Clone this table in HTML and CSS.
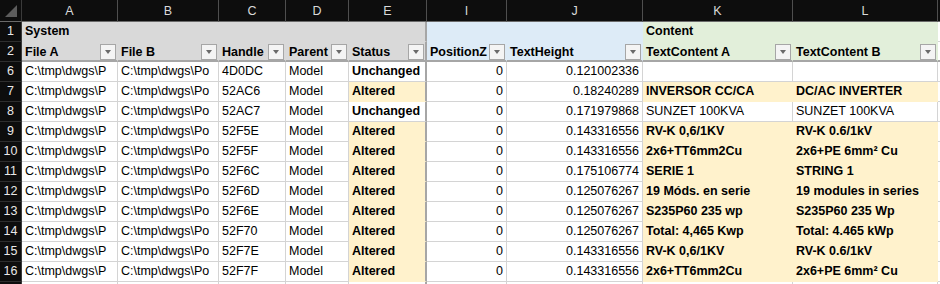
FILE: index.html
```html
<!DOCTYPE html>
<html>
<head>
<meta charset="utf-8">
<link rel="stylesheet" href="styles.css">
</head>
<body>
<div class="sheet">
  <div class="corner"><svg width="22" height="22" viewBox="0 0 22 22"><polygon points="17,5 17,17 5,17" fill="#5c5c5c"/></svg></div>
  <div class="ch">A</div><div class="ch">B</div><div class="ch">C</div><div class="ch">D</div><div class="ch">E</div>
  <div class="ch">I</div><div class="ch">J</div><div class="ch">K</div><div class="ch">L</div><div class="ch last"></div>

  <div class="rh">1</div>
  <div class="c hg b">System</div><div class="c hg"></div><div class="c hg"></div><div class="c hg"></div><div class="c hg fz"></div>
  <div class="c hb"></div><div class="c hb"></div>
  <div class="c hgr b">Content</div><div class="c hgr"></div><div class="c"></div>

  <div class="rh">2</div>
  <div class="c hg b r2">File A<span class="filt"></span></div>
  <div class="c hg b r2">File B<span class="filt"></span></div>
  <div class="c hg b r2">Handle<span class="filt"></span></div>
  <div class="c hg b r2">Parent<span class="filt"></span></div>
  <div class="c hg b r2 fz">Status<span class="filt"></span></div>
  <div class="c hb b r2">PositionZ<span class="filt"></span></div>
  <div class="c hb b r2">TextHeight<span class="filt"></span></div>
  <div class="c hgr b r2">TextContent A<span class="filt"></span></div>
  <div class="c hgr b r2">TextContent B<span class="filt"></span></div>
  <div class="c r2"></div>

  <div class="rh">6</div>
  <div class="c">C:\tmp\dwgs\P</div><div class="c">C:\tmp\dwgs\Po</div><div class="c">4D0DC</div><div class="c">Model</div>
  <div class="c fz b">Unchanged</div><div class="c num">0</div><div class="c num">0.121002336</div>
  <div class="c"></div><div class="c"></div><div class="c"></div>

  <div class="rh">7</div>
  <div class="c">C:\tmp\dwgs\P</div><div class="c">C:\tmp\dwgs\Po</div><div class="c">52AC6</div><div class="c">Model</div>
  <div class="c fz b alt">Altered</div><div class="c num">0</div><div class="c num">0.18240289</div>
  <div class="c b alt">INVERSOR CC/CA</div><div class="c b alt">DC/AC INVERTER</div><div class="c"></div>

  <div class="rh">8</div>
  <div class="c">C:\tmp\dwgs\P</div><div class="c">C:\tmp\dwgs\Po</div><div class="c">52AC7</div><div class="c">Model</div>
  <div class="c fz b">Unchanged</div><div class="c num">0</div><div class="c num">0.171979868</div>
  <div class="c">SUNZET 100KVA</div><div class="c">SUNZET 100KVA</div><div class="c"></div>

  <div class="rh">9</div>
  <div class="c">C:\tmp\dwgs\P</div><div class="c">C:\tmp\dwgs\Po</div><div class="c">52F5E</div><div class="c">Model</div>
  <div class="c fz b alt">Altered</div><div class="c num">0</div><div class="c num">0.143316556</div>
  <div class="c b alt">RV-K 0,6/1KV</div><div class="c b alt">RV-K 0.6/1kV</div><div class="c"></div>

  <div class="rh">10</div>
  <div class="c">C:\tmp\dwgs\P</div><div class="c">C:\tmp\dwgs\Po</div><div class="c">52F5F</div><div class="c">Model</div>
  <div class="c fz b alt">Altered</div><div class="c num">0</div><div class="c num">0.143316556</div>
  <div class="c b alt">2x6+TT6mm2Cu</div><div class="c b alt">2x6+PE 6mm² Cu</div><div class="c"></div>

  <div class="rh">11</div>
  <div class="c">C:\tmp\dwgs\P</div><div class="c">C:\tmp\dwgs\Po</div><div class="c">52F6C</div><div class="c">Model</div>
  <div class="c fz b alt">Altered</div><div class="c num">0</div><div class="c num">0.175106774</div>
  <div class="c b alt">SERIE 1</div><div class="c b alt">STRING 1</div><div class="c"></div>

  <div class="rh">12</div>
  <div class="c">C:\tmp\dwgs\P</div><div class="c">C:\tmp\dwgs\Po</div><div class="c">52F6D</div><div class="c">Model</div>
  <div class="c fz b alt">Altered</div><div class="c num">0</div><div class="c num">0.125076267</div>
  <div class="c b alt">19 Móds. en serie</div><div class="c b alt">19 modules in series</div><div class="c"></div>

  <div class="rh">13</div>
  <div class="c">C:\tmp\dwgs\P</div><div class="c">C:\tmp\dwgs\Po</div><div class="c">52F6E</div><div class="c">Model</div>
  <div class="c fz b alt">Altered</div><div class="c num">0</div><div class="c num">0.125076267</div>
  <div class="c b alt">S235P60 235 wp</div><div class="c b alt">S235P60 235 Wp</div><div class="c"></div>

  <div class="rh">14</div>
  <div class="c">C:\tmp\dwgs\P</div><div class="c">C:\tmp\dwgs\Po</div><div class="c">52F70</div><div class="c">Model</div>
  <div class="c fz b alt">Altered</div><div class="c num">0</div><div class="c num">0.125076267</div>
  <div class="c b alt">Total: 4,465 Kwp</div><div class="c b alt">Total: 4.465 kWp</div><div class="c"></div>

  <div class="rh">15</div>
  <div class="c">C:\tmp\dwgs\P</div><div class="c">C:\tmp\dwgs\Po</div><div class="c">52F7E</div><div class="c">Model</div>
  <div class="c fz b alt">Altered</div><div class="c num">0</div><div class="c num">0.143316556</div>
  <div class="c b alt">RV-K 0,6/1KV</div><div class="c b alt">RV-K 0.6/1kV</div><div class="c"></div>

  <div class="rh">16</div>
  <div class="c">C:\tmp\dwgs\P</div><div class="c">C:\tmp\dwgs\Po</div><div class="c">52F7F</div><div class="c">Model</div>
  <div class="c fz b alt">Altered</div><div class="c num">0</div><div class="c num">0.143316556</div>
  <div class="c b alt">2x6+TT6mm2Cu</div><div class="c b alt">2x6+PE 6mm² Cu</div><div class="c"></div>

  <div class="rh"></div>
  <div class="c"></div><div class="c"></div><div class="c"></div><div class="c"></div>
  <div class="c fz"></div><div class="c"></div><div class="c"></div>
  <div class="c"></div><div class="c"></div><div class="c"></div>
</div>
</body>
</html>
```
FILE: styles.css
```css
html, body {
  margin: 0;
  padding: 0;
  background: #ffffff;
}

body {
  font-family: "Liberation Sans", Arial, sans-serif;
  font-size: 12.5px;
  color: #000000;
}

.sheet {
  display: grid;
  grid-template-columns: 22px 96px 101px 67px 63px 78px 80px 136px 150px 145px 1fr;
  grid-template-rows: 22px repeat(14, 20px);
  width: 940px;
  height: 284px;
  overflow: hidden;
}

.corner {
  background: #0d0d0d;
  border-right: 1px solid #3a3a3a;
  border-bottom: 1px solid #6a6a6a;
  box-sizing: border-box;
  line-height: 0;
}

.ch {
  background: #0d0d0d;
  color: #d9d9d9;
  text-align: center;
  box-sizing: border-box;
  padding-top: 2px;
  line-height: 19px;
  border-right: 1px solid #4e4e4e;
  border-bottom: 1px solid #6a6a6a;
}

.ch.last {
  border-right: none;
}

.rh {
  background: #0d0d0d;
  color: #e8e8e8;
  text-align: center;
  box-sizing: border-box;
  line-height: 19px;
  border-right: 1px solid #3a3a3a;
  border-bottom: 1px solid #2e2e2e;
}

.c {
  position: relative;
  box-sizing: border-box;
  padding: 0 3px;
  line-height: 19px;
  white-space: nowrap;
  overflow: hidden;
  border-right: 1px solid #d4d4d4;
  border-bottom: 1px solid #d4d4d4;
}

.b {
  font-weight: bold;
}

.num {
  text-align: right;
}

.hg {
  background: #d9d9d9;
  border-color: #d9d9d9;
}

.hb {
  background: #ddebf7;
  border-color: #ddebf7;
}

.hgr {
  background: #e2efda;
  border-color: #e2efda;
}

.alt {
  background: #fff2cc;
  border-color: #fff2cc;
}

.r2 {
  border-bottom: 2px solid #a6a6a6;
  line-height: 20px;
}

.fz {
  border-right: 2px solid #a6a6a6;
}

.filt {
  position: absolute;
  right: 1px;
  top: 2px;
  width: 16px;
  height: 16px;
  box-sizing: border-box;
  border: 1px solid #a6a6a6;
  background: #f4f4f4;
}

.filt::after {
  content: "";
  position: absolute;
  left: 4px;
  top: 5px;
  width: 0;
  height: 0;
  border-left: 3px solid transparent;
  border-right: 3px solid transparent;
  border-top: 4px solid #6a6a6a;
}
```
